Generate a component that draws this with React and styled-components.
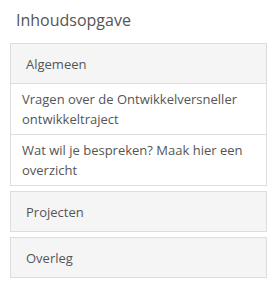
import React from 'react'
import styled, { createGlobalStyle } from 'styled-components'

const GlobalStyle = createGlobalStyle`
    body {
        margin: 0;
        background: #fff;
        font-family: "Open Sans", "Liberation Sans", sans-serif;
        color: #555;
    }
`

const Wrapper = styled.div`
    padding: 8px 10px 0 10px;
    width: 257px;
`

const Title = styled.h3`
    margin: 0 0 11px 6px;
    font-size: 16px;
    font-weight: 400;
    line-height: 24px;
    color: #555;
`

const Panel = styled.div`
    border: 1px solid #ddd;
    margin-bottom: 5px;
    background: #fff;
`

const Heading = styled.div`
    background: #f5f5f5;
    padding: 10px 15px 9px 15px;
    font-size: 13px;
    line-height: 20px;
    color: #555;
    border-bottom: ${({ $open }) => ($open ? '1px solid #ddd' : 'none')};
`

const List = styled.div`
    display: flex;
    flex-direction: column;
`

const Item = styled.div`
    padding: 5px 11px 5px 11px;
    font-size: 13px;
    line-height: 20px;
    color: #555;
    & + & {
        border-top: 1px solid #ddd;
    }
`

const sections = [
    {
        title: 'Algemeen',
        items: [
            'Vragen over de Ontwikkelversneller ontwikkeltraject',
            'Wat wil je bespreken? Maak hier een overzicht',
        ],
    },
    { title: 'Projecten', items: [] },
    { title: 'Overleg', items: [] },
]

const App = () => {
    return (
        <Wrapper>
            <GlobalStyle />
            <Title>Inhoudsopgave</Title>
            {sections.map((s) => (
                <Panel key={s.title}>
                    <Heading $open={s.items.length > 0}>{s.title}</Heading>
                    {s.items.length > 0 && (
                        <List>
                            {s.items.map((it) => (
                                <Item key={it}>{it}</Item>
                            ))}
                        </List>
                    )}
                </Panel>
            ))}
        </Wrapper>
    )
}

export default App
